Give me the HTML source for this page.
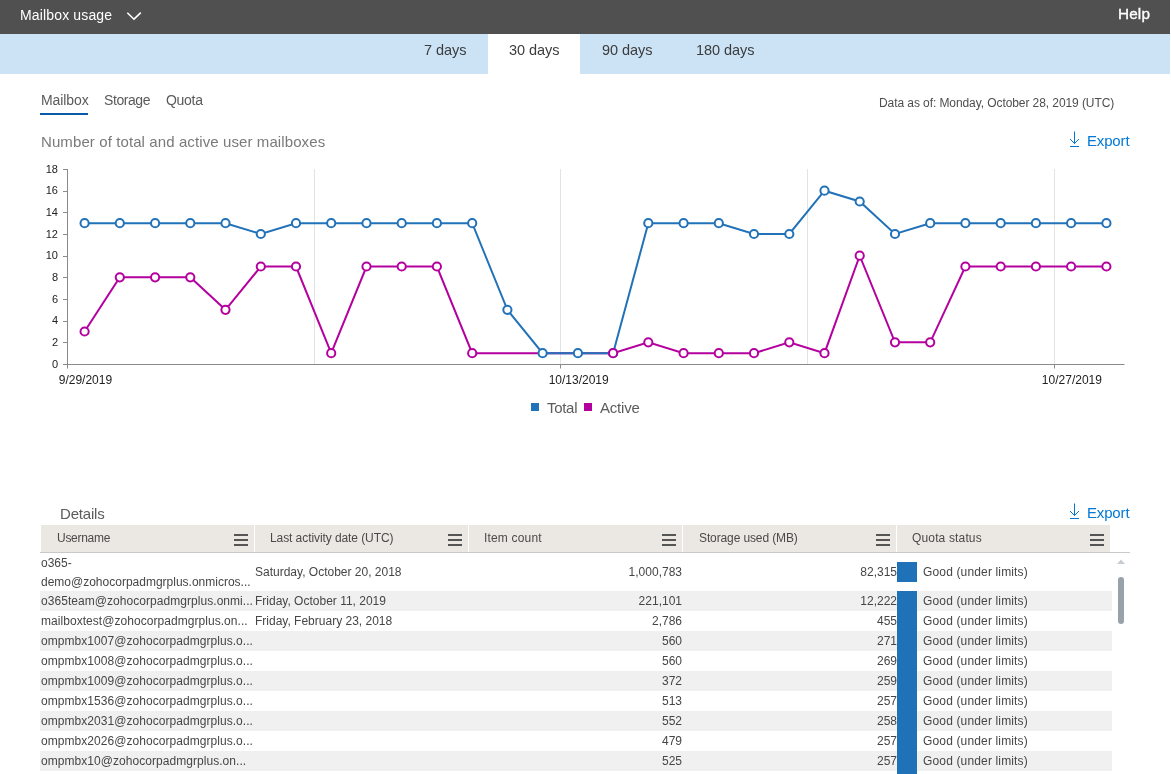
<!DOCTYPE html>
<html><head><meta charset="utf-8"><style>
html,body{margin:0;padding:0;}
body{width:1171px;height:774px;position:relative;overflow:hidden;background:#fff;font-family:"Liberation Sans", sans-serif;}
.t{position:absolute;white-space:nowrap;will-change:transform;}
svg{will-change:transform;}
</style></head><body>
<div style="position:absolute;left:0;top:0;width:1170px;height:34px;background:#505050"></div>
<div class="t" style="left:20.20px;top:7.85px;font-size:14px;line-height:14px;color:#fff;letter-spacing:0.15px;">Mailbox usage</div>
<svg style="position:absolute;left:125px;top:10px" width="18" height="12" viewBox="0 0 18 12"><polyline points="2.3,2.7 9,9.2 15.8,2.7" fill="none" stroke="#fff" stroke-width="1.6"/></svg>
<div class="t" style="left:1118.20px;top:5.85px;font-size:15.3px;line-height:15.3px;color:#fff;letter-spacing:0.15px;-webkit-text-stroke:0.35px #fff">Help</div>
<div style="position:absolute;left:0;top:34px;width:1170px;height:40px;background:#cce2f5"></div>
<div style="position:absolute;left:488px;top:34px;width:92px;height:40px;background:#fff"></div>
<div class="t" style="left:423.80px;top:42.73px;font-size:14.5px;line-height:14.5px;color:#3c3c3c;letter-spacing:-0.05px;">7 days</div>
<div class="t" style="left:508.90px;top:42.73px;font-size:14.5px;line-height:14.5px;color:#3c3c3c;letter-spacing:-0.05px;">30 days</div>
<div class="t" style="left:601.70px;top:42.73px;font-size:14.5px;line-height:14.5px;color:#3c3c3c;letter-spacing:-0.05px;">90 days</div>
<div class="t" style="left:695.60px;top:42.73px;font-size:14.5px;line-height:14.5px;color:#3c3c3c;letter-spacing:-0.05px;">180 days</div>
<div class="t" style="left:40.60px;top:93.05px;font-size:14px;line-height:14px;color:#5a5a5a;letter-spacing:-0.1px;">Mailbox</div>
<div class="t" style="left:103.80px;top:93.05px;font-size:14px;line-height:14px;color:#5a5a5a;letter-spacing:-0.42px;">Storage</div>
<div class="t" style="left:165.80px;top:93.05px;font-size:14px;line-height:14px;color:#5a5a5a;letter-spacing:-0.3px;">Quota</div>
<div style="position:absolute;left:40px;top:113px;width:48px;height:2px;background:#0b5aa8"></div>
<div class="t" style="left:878.90px;top:97.14px;font-size:12px;line-height:12px;color:#4e4e4e;letter-spacing:-0.08px;">Data as of: Monday, October 28, 2019 (UTC)</div>
<div class="t" style="left:40.60px;top:134.10px;font-size:15px;line-height:15px;color:#7a7a7a;letter-spacing:0.1px;">Number of total and active user mailboxes</div>
<svg style="position:absolute;left:1068px;top:130px" width="14" height="20" viewBox="0 0 14 20"><path d="M6.5 1.5 V13.5 M2 9 L6.5 13.5 L11 9 M2 16.5 H11" fill="none" stroke="#0078d4" stroke-width="1"/></svg>
<div class="t" style="left:1087.00px;top:133.20px;font-size:15px;line-height:15px;color:#0078d4;letter-spacing:-0.16px;">Export</div>
<svg style="position:absolute;left:0;top:0" width="1171" height="774"><line x1="314.5" y1="169" x2="314.5" y2="364" stroke="#e3e3e3" stroke-width="1"/><line x1="560.5" y1="169" x2="560.5" y2="364" stroke="#e3e3e3" stroke-width="1"/><line x1="807.5" y1="169" x2="807.5" y2="364" stroke="#e3e3e3" stroke-width="1"/><line x1="1054.5" y1="169" x2="1054.5" y2="364" stroke="#e3e3e3" stroke-width="1"/><line x1="67.5" y1="169" x2="67.5" y2="365" stroke="#8a8a8a" stroke-width="1"/><line x1="67" y1="364.5" x2="1124.5" y2="364.5" stroke="#8a8a8a" stroke-width="1"/><line x1="63" y1="364.5" x2="67" y2="364.5" stroke="#8a8a8a" stroke-width="1"/><text x="58" y="367.5" text-anchor="end" font-family="Liberation Sans" font-size="11" fill="#222">0</text><line x1="63" y1="342.5" x2="67" y2="342.5" stroke="#8a8a8a" stroke-width="1"/><text x="58" y="345.8" text-anchor="end" font-family="Liberation Sans" font-size="11" fill="#222">2</text><line x1="63" y1="321.5" x2="67" y2="321.5" stroke="#8a8a8a" stroke-width="1"/><text x="58" y="324.2" text-anchor="end" font-family="Liberation Sans" font-size="11" fill="#222">4</text><line x1="63" y1="299.5" x2="67" y2="299.5" stroke="#8a8a8a" stroke-width="1"/><text x="58" y="302.5" text-anchor="end" font-family="Liberation Sans" font-size="11" fill="#222">6</text><line x1="63" y1="277.5" x2="67" y2="277.5" stroke="#8a8a8a" stroke-width="1"/><text x="58" y="280.8" text-anchor="end" font-family="Liberation Sans" font-size="11" fill="#222">8</text><line x1="63" y1="256.5" x2="67" y2="256.5" stroke="#8a8a8a" stroke-width="1"/><text x="58" y="259.2" text-anchor="end" font-family="Liberation Sans" font-size="11" fill="#222">10</text><line x1="63" y1="234.5" x2="67" y2="234.5" stroke="#8a8a8a" stroke-width="1"/><text x="58" y="237.5" text-anchor="end" font-family="Liberation Sans" font-size="11" fill="#222">12</text><line x1="63" y1="212.5" x2="67" y2="212.5" stroke="#8a8a8a" stroke-width="1"/><text x="58" y="215.8" text-anchor="end" font-family="Liberation Sans" font-size="11" fill="#222">14</text><line x1="63" y1="191.5" x2="67" y2="191.5" stroke="#8a8a8a" stroke-width="1"/><text x="58" y="194.2" text-anchor="end" font-family="Liberation Sans" font-size="11" fill="#222">16</text><line x1="63" y1="169.5" x2="67" y2="169.5" stroke="#8a8a8a" stroke-width="1"/><text x="58" y="172.5" text-anchor="end" font-family="Liberation Sans" font-size="11" fill="#222">18</text><line x1="67.5" y1="364" x2="67.5" y2="368.5" stroke="#8a8a8a" stroke-width="1"/><text x="85.4" y="384" text-anchor="middle" font-family="Liberation Sans" font-size="12" fill="#222">9/29/2019</text><line x1="560.5" y1="364" x2="560.5" y2="368.5" stroke="#8a8a8a" stroke-width="1"/><text x="578.7" y="384" text-anchor="middle" font-family="Liberation Sans" font-size="12" fill="#222">10/13/2019</text><line x1="1054.5" y1="364" x2="1054.5" y2="368.5" stroke="#8a8a8a" stroke-width="1"/><text x="1071.9" y="384" text-anchor="middle" font-family="Liberation Sans" font-size="12" fill="#222">10/27/2019</text><path d="M84.6,331.5 L119.8,277.3 L155.1,277.3 L190.3,277.3 L225.5,309.8 L260.8,266.5 L296.0,266.5 L331.2,353.2 L366.5,266.5 L401.7,266.5 L436.9,266.5 L472.2,353.2 L613.1,353.2 L648.3,342.3 L683.6,353.2 L718.8,353.2 L754.0,353.2 L789.3,342.3 L824.5,353.2 L859.7,255.7 L895.0,342.3 L930.2,342.3 L965.4,266.5 L1000.7,266.5 L1035.9,266.5 L1071.1,266.5 L1106.4,266.5" fill="none" stroke="#b4009e" stroke-width="2"/><path d="M84.6,223.2 L119.8,223.2 L155.1,223.2 L190.3,223.2 L225.5,223.2 L260.8,234.0 L296.0,223.2 L331.2,223.2 L366.5,223.2 L401.7,223.2 L436.9,223.2 L472.2,223.2 L507.4,309.8 L542.6,353.2 L577.9,353.2 L613.1,353.2 L648.3,223.2 L683.6,223.2 L718.8,223.2 L754.0,234.0 L789.3,234.0 L824.5,190.7 L859.7,201.5 L895.0,234.0 L930.2,223.2 L965.4,223.2 L1000.7,223.2 L1035.9,223.2 L1071.1,223.2 L1106.4,223.2" fill="none" stroke="#2172b8" stroke-width="2"/><circle cx="84.6" cy="223.2" r="4.1" fill="#fff" stroke="#2172b8" stroke-width="2"/><circle cx="119.8" cy="223.2" r="4.1" fill="#fff" stroke="#2172b8" stroke-width="2"/><circle cx="155.1" cy="223.2" r="4.1" fill="#fff" stroke="#2172b8" stroke-width="2"/><circle cx="190.3" cy="223.2" r="4.1" fill="#fff" stroke="#2172b8" stroke-width="2"/><circle cx="225.5" cy="223.2" r="4.1" fill="#fff" stroke="#2172b8" stroke-width="2"/><circle cx="260.8" cy="234.0" r="4.1" fill="#fff" stroke="#2172b8" stroke-width="2"/><circle cx="296.0" cy="223.2" r="4.1" fill="#fff" stroke="#2172b8" stroke-width="2"/><circle cx="331.2" cy="223.2" r="4.1" fill="#fff" stroke="#2172b8" stroke-width="2"/><circle cx="366.5" cy="223.2" r="4.1" fill="#fff" stroke="#2172b8" stroke-width="2"/><circle cx="401.7" cy="223.2" r="4.1" fill="#fff" stroke="#2172b8" stroke-width="2"/><circle cx="436.9" cy="223.2" r="4.1" fill="#fff" stroke="#2172b8" stroke-width="2"/><circle cx="472.2" cy="223.2" r="4.1" fill="#fff" stroke="#2172b8" stroke-width="2"/><circle cx="507.4" cy="309.8" r="4.1" fill="#fff" stroke="#2172b8" stroke-width="2"/><circle cx="542.6" cy="353.2" r="4.1" fill="#fff" stroke="#2172b8" stroke-width="2"/><circle cx="577.9" cy="353.2" r="4.1" fill="#fff" stroke="#2172b8" stroke-width="2"/><circle cx="613.1" cy="353.2" r="4.1" fill="#fff" stroke="#2172b8" stroke-width="2"/><circle cx="648.3" cy="223.2" r="4.1" fill="#fff" stroke="#2172b8" stroke-width="2"/><circle cx="683.6" cy="223.2" r="4.1" fill="#fff" stroke="#2172b8" stroke-width="2"/><circle cx="718.8" cy="223.2" r="4.1" fill="#fff" stroke="#2172b8" stroke-width="2"/><circle cx="754.0" cy="234.0" r="4.1" fill="#fff" stroke="#2172b8" stroke-width="2"/><circle cx="789.3" cy="234.0" r="4.1" fill="#fff" stroke="#2172b8" stroke-width="2"/><circle cx="824.5" cy="190.7" r="4.1" fill="#fff" stroke="#2172b8" stroke-width="2"/><circle cx="859.7" cy="201.5" r="4.1" fill="#fff" stroke="#2172b8" stroke-width="2"/><circle cx="895.0" cy="234.0" r="4.1" fill="#fff" stroke="#2172b8" stroke-width="2"/><circle cx="930.2" cy="223.2" r="4.1" fill="#fff" stroke="#2172b8" stroke-width="2"/><circle cx="965.4" cy="223.2" r="4.1" fill="#fff" stroke="#2172b8" stroke-width="2"/><circle cx="1000.7" cy="223.2" r="4.1" fill="#fff" stroke="#2172b8" stroke-width="2"/><circle cx="1035.9" cy="223.2" r="4.1" fill="#fff" stroke="#2172b8" stroke-width="2"/><circle cx="1071.1" cy="223.2" r="4.1" fill="#fff" stroke="#2172b8" stroke-width="2"/><circle cx="1106.4" cy="223.2" r="4.1" fill="#fff" stroke="#2172b8" stroke-width="2"/><circle cx="84.6" cy="331.5" r="4.1" fill="#fff" stroke="#b4009e" stroke-width="2"/><circle cx="119.8" cy="277.3" r="4.1" fill="#fff" stroke="#b4009e" stroke-width="2"/><circle cx="155.1" cy="277.3" r="4.1" fill="#fff" stroke="#b4009e" stroke-width="2"/><circle cx="190.3" cy="277.3" r="4.1" fill="#fff" stroke="#b4009e" stroke-width="2"/><circle cx="225.5" cy="309.8" r="4.1" fill="#fff" stroke="#b4009e" stroke-width="2"/><circle cx="260.8" cy="266.5" r="4.1" fill="#fff" stroke="#b4009e" stroke-width="2"/><circle cx="296.0" cy="266.5" r="4.1" fill="#fff" stroke="#b4009e" stroke-width="2"/><circle cx="331.2" cy="353.2" r="4.1" fill="#fff" stroke="#b4009e" stroke-width="2"/><circle cx="366.5" cy="266.5" r="4.1" fill="#fff" stroke="#b4009e" stroke-width="2"/><circle cx="401.7" cy="266.5" r="4.1" fill="#fff" stroke="#b4009e" stroke-width="2"/><circle cx="436.9" cy="266.5" r="4.1" fill="#fff" stroke="#b4009e" stroke-width="2"/><circle cx="472.2" cy="353.2" r="4.1" fill="#fff" stroke="#b4009e" stroke-width="2"/><circle cx="613.1" cy="353.2" r="4.1" fill="#fff" stroke="#b4009e" stroke-width="2"/><circle cx="648.3" cy="342.3" r="4.1" fill="#fff" stroke="#b4009e" stroke-width="2"/><circle cx="683.6" cy="353.2" r="4.1" fill="#fff" stroke="#b4009e" stroke-width="2"/><circle cx="718.8" cy="353.2" r="4.1" fill="#fff" stroke="#b4009e" stroke-width="2"/><circle cx="754.0" cy="353.2" r="4.1" fill="#fff" stroke="#b4009e" stroke-width="2"/><circle cx="789.3" cy="342.3" r="4.1" fill="#fff" stroke="#b4009e" stroke-width="2"/><circle cx="824.5" cy="353.2" r="4.1" fill="#fff" stroke="#b4009e" stroke-width="2"/><circle cx="859.7" cy="255.7" r="4.1" fill="#fff" stroke="#b4009e" stroke-width="2"/><circle cx="895.0" cy="342.3" r="4.1" fill="#fff" stroke="#b4009e" stroke-width="2"/><circle cx="930.2" cy="342.3" r="4.1" fill="#fff" stroke="#b4009e" stroke-width="2"/><circle cx="965.4" cy="266.5" r="4.1" fill="#fff" stroke="#b4009e" stroke-width="2"/><circle cx="1000.7" cy="266.5" r="4.1" fill="#fff" stroke="#b4009e" stroke-width="2"/><circle cx="1035.9" cy="266.5" r="4.1" fill="#fff" stroke="#b4009e" stroke-width="2"/><circle cx="1071.1" cy="266.5" r="4.1" fill="#fff" stroke="#b4009e" stroke-width="2"/><circle cx="1106.4" cy="266.5" r="4.1" fill="#fff" stroke="#b4009e" stroke-width="2"/></svg>
<div style="position:absolute;left:531px;top:403px;width:8px;height:8px;background:#2172b8"></div>
<div class="t" style="left:546.90px;top:400.00px;font-size:15px;line-height:15px;color:#5c5c5c;letter-spacing:-0.3px;">Total</div>
<div style="position:absolute;left:584px;top:403px;width:8px;height:8px;background:#b4009e"></div>
<div class="t" style="left:599.50px;top:400.00px;font-size:15px;line-height:15px;color:#5c5c5c;letter-spacing:-0.2px;">Active</div>
<div class="t" style="left:60.40px;top:506.10px;font-size:15px;line-height:15px;color:#5c5c5c;letter-spacing:-0.18px;">Details</div>
<svg style="position:absolute;left:1068px;top:502px" width="14" height="20" viewBox="0 0 14 20"><path d="M6.5 1.5 V13.5 M2 9 L6.5 13.5 L11 9 M2 16.5 H11" fill="none" stroke="#0078d4" stroke-width="1"/></svg>
<div class="t" style="left:1087.00px;top:505.20px;font-size:15px;line-height:15px;color:#0078d4;letter-spacing:-0.16px;">Export</div>
<div style="position:absolute;left:41px;top:525px;width:1069px;height:27px;background:#ebe7e3"></div>
<div style="position:absolute;left:40px;top:552px;width:1090px;height:1px;background:#c9c9c9"></div>
<div style="position:absolute;left:254px;top:525px;width:1px;height:27px;background:#fff"></div>
<div style="position:absolute;left:468px;top:525px;width:1px;height:27px;background:#fff"></div>
<div style="position:absolute;left:682px;top:525px;width:1px;height:27px;background:#fff"></div>
<div style="position:absolute;left:896px;top:525px;width:1px;height:27px;background:#fff"></div>
<div class="t" style="left:57.00px;top:531.84px;font-size:12px;line-height:12px;color:#4a4a4a;letter-spacing:-0.29px;">Username</div>
<div style="position:absolute;left:234px;top:534px;width:14px;height:2px;background:#555"></div>
<div style="position:absolute;left:234px;top:539px;width:14px;height:2px;background:#555"></div>
<div style="position:absolute;left:234px;top:544px;width:14px;height:2px;background:#555"></div>
<div class="t" style="left:270.00px;top:531.84px;font-size:12px;line-height:12px;color:#4a4a4a;letter-spacing:-0.08px;">Last activity date (UTC)</div>
<div style="position:absolute;left:448px;top:534px;width:14px;height:2px;background:#555"></div>
<div style="position:absolute;left:448px;top:539px;width:14px;height:2px;background:#555"></div>
<div style="position:absolute;left:448px;top:544px;width:14px;height:2px;background:#555"></div>
<div class="t" style="left:484.00px;top:531.84px;font-size:12px;line-height:12px;color:#4a4a4a;letter-spacing:0.17px;">Item count</div>
<div style="position:absolute;left:662px;top:534px;width:14px;height:2px;background:#555"></div>
<div style="position:absolute;left:662px;top:539px;width:14px;height:2px;background:#555"></div>
<div style="position:absolute;left:662px;top:544px;width:14px;height:2px;background:#555"></div>
<div class="t" style="left:698.50px;top:531.84px;font-size:12px;line-height:12px;color:#4a4a4a;letter-spacing:-0.12px;">Storage used (MB)</div>
<div style="position:absolute;left:876px;top:534px;width:14px;height:2px;background:#555"></div>
<div style="position:absolute;left:876px;top:539px;width:14px;height:2px;background:#555"></div>
<div style="position:absolute;left:876px;top:544px;width:14px;height:2px;background:#555"></div>
<div class="t" style="left:912.00px;top:531.84px;font-size:12px;line-height:12px;color:#4a4a4a;letter-spacing:0.15px;">Quota status</div>
<div style="position:absolute;left:1090px;top:534px;width:14px;height:2px;background:#555"></div>
<div style="position:absolute;left:1090px;top:539px;width:14px;height:2px;background:#555"></div>
<div style="position:absolute;left:1090px;top:544px;width:14px;height:2px;background:#555"></div>
<div class="t" style="left:41.00px;top:557.24px;font-size:12px;line-height:12px;color:#464646;letter-spacing:0px;">o365-</div>
<div class="t" style="left:41.00px;top:575.64px;font-size:12px;line-height:12px;color:#464646;letter-spacing:0px;">demo@zohocorpadmgrplus.onmicros...</div>
<div class="t" style="left:254.50px;top:566.44px;font-size:12px;line-height:12px;color:#464646;letter-spacing:0px;">Saturday, October 20, 2018</div>
<div class="t" style="left:682.00px;top:566.44px;font-size:12px;line-height:12px;color:#464646;letter-spacing:0px;transform:translateX(-100%)">1,000,783</div>
<div class="t" style="left:896.50px;top:566.44px;font-size:12px;line-height:12px;color:#464646;letter-spacing:0px;transform:translateX(-100%)">82,315</div>
<div style="position:absolute;left:897px;top:562px;width:20px;height:20px;background:#2072b8"></div>
<div class="t" style="left:922.50px;top:566.44px;font-size:12px;line-height:12px;color:#464646;letter-spacing:0.15px;">Good (under limits)</div>
<div style="position:absolute;left:40px;top:591px;width:1072px;height:20px;background:#f0f0f0"></div>
<div class="t" style="left:41.00px;top:595.14px;font-size:12px;line-height:12px;color:#464646;letter-spacing:0.05px;">o365team@zohocorpadmgrplus.onmi...</div>
<div class="t" style="left:254.50px;top:595.14px;font-size:12px;line-height:12px;color:#464646;letter-spacing:0px;">Friday, October 11, 2019</div>
<div class="t" style="left:682.00px;top:595.14px;font-size:12px;line-height:12px;color:#464646;letter-spacing:0px;transform:translateX(-100%)">221,101</div>
<div class="t" style="left:896.50px;top:595.14px;font-size:12px;line-height:12px;color:#464646;letter-spacing:0px;transform:translateX(-100%)">12,222</div>
<div style="position:absolute;left:897px;top:591px;width:20px;height:20px;background:#2072b8"></div>
<div class="t" style="left:922.50px;top:595.14px;font-size:12px;line-height:12px;color:#464646;letter-spacing:0.15px;">Good (under limits)</div>
<div class="t" style="left:41.00px;top:615.14px;font-size:12px;line-height:12px;color:#464646;letter-spacing:0.05px;">mailboxtest@zohocorpadmgrplus.on...</div>
<div class="t" style="left:254.50px;top:615.14px;font-size:12px;line-height:12px;color:#464646;letter-spacing:0px;">Friday, February 23, 2018</div>
<div class="t" style="left:682.00px;top:615.14px;font-size:12px;line-height:12px;color:#464646;letter-spacing:0px;transform:translateX(-100%)">2,786</div>
<div class="t" style="left:896.50px;top:615.14px;font-size:12px;line-height:12px;color:#464646;letter-spacing:0px;transform:translateX(-100%)">455</div>
<div style="position:absolute;left:897px;top:611px;width:20px;height:20px;background:#2072b8"></div>
<div class="t" style="left:922.50px;top:615.14px;font-size:12px;line-height:12px;color:#464646;letter-spacing:0.15px;">Good (under limits)</div>
<div style="position:absolute;left:40px;top:631px;width:1072px;height:20px;background:#f0f0f0"></div>
<div class="t" style="left:41.00px;top:635.14px;font-size:12px;line-height:12px;color:#464646;letter-spacing:0.05px;">ompmbx1007@zohocorpadmgrplus.o...</div>
<div class="t" style="left:682.00px;top:635.14px;font-size:12px;line-height:12px;color:#464646;letter-spacing:0px;transform:translateX(-100%)">560</div>
<div class="t" style="left:896.50px;top:635.14px;font-size:12px;line-height:12px;color:#464646;letter-spacing:0px;transform:translateX(-100%)">271</div>
<div style="position:absolute;left:897px;top:631px;width:20px;height:20px;background:#2072b8"></div>
<div class="t" style="left:922.50px;top:635.14px;font-size:12px;line-height:12px;color:#464646;letter-spacing:0.15px;">Good (under limits)</div>
<div class="t" style="left:41.00px;top:655.14px;font-size:12px;line-height:12px;color:#464646;letter-spacing:0.05px;">ompmbx1008@zohocorpadmgrplus.o...</div>
<div class="t" style="left:682.00px;top:655.14px;font-size:12px;line-height:12px;color:#464646;letter-spacing:0px;transform:translateX(-100%)">560</div>
<div class="t" style="left:896.50px;top:655.14px;font-size:12px;line-height:12px;color:#464646;letter-spacing:0px;transform:translateX(-100%)">269</div>
<div style="position:absolute;left:897px;top:651px;width:20px;height:20px;background:#2072b8"></div>
<div class="t" style="left:922.50px;top:655.14px;font-size:12px;line-height:12px;color:#464646;letter-spacing:0.15px;">Good (under limits)</div>
<div style="position:absolute;left:40px;top:671px;width:1072px;height:20px;background:#f0f0f0"></div>
<div class="t" style="left:41.00px;top:675.14px;font-size:12px;line-height:12px;color:#464646;letter-spacing:0.05px;">ompmbx1009@zohocorpadmgrplus.o...</div>
<div class="t" style="left:682.00px;top:675.14px;font-size:12px;line-height:12px;color:#464646;letter-spacing:0px;transform:translateX(-100%)">372</div>
<div class="t" style="left:896.50px;top:675.14px;font-size:12px;line-height:12px;color:#464646;letter-spacing:0px;transform:translateX(-100%)">259</div>
<div style="position:absolute;left:897px;top:671px;width:20px;height:20px;background:#2072b8"></div>
<div class="t" style="left:922.50px;top:675.14px;font-size:12px;line-height:12px;color:#464646;letter-spacing:0.15px;">Good (under limits)</div>
<div class="t" style="left:41.00px;top:695.14px;font-size:12px;line-height:12px;color:#464646;letter-spacing:0.05px;">ompmbx1536@zohocorpadmgrplus.o...</div>
<div class="t" style="left:682.00px;top:695.14px;font-size:12px;line-height:12px;color:#464646;letter-spacing:0px;transform:translateX(-100%)">513</div>
<div class="t" style="left:896.50px;top:695.14px;font-size:12px;line-height:12px;color:#464646;letter-spacing:0px;transform:translateX(-100%)">257</div>
<div style="position:absolute;left:897px;top:691px;width:20px;height:20px;background:#2072b8"></div>
<div class="t" style="left:922.50px;top:695.14px;font-size:12px;line-height:12px;color:#464646;letter-spacing:0.15px;">Good (under limits)</div>
<div style="position:absolute;left:40px;top:711px;width:1072px;height:20px;background:#f0f0f0"></div>
<div class="t" style="left:41.00px;top:715.14px;font-size:12px;line-height:12px;color:#464646;letter-spacing:0.05px;">ompmbx2031@zohocorpadmgrplus.o...</div>
<div class="t" style="left:682.00px;top:715.14px;font-size:12px;line-height:12px;color:#464646;letter-spacing:0px;transform:translateX(-100%)">552</div>
<div class="t" style="left:896.50px;top:715.14px;font-size:12px;line-height:12px;color:#464646;letter-spacing:0px;transform:translateX(-100%)">258</div>
<div style="position:absolute;left:897px;top:711px;width:20px;height:20px;background:#2072b8"></div>
<div class="t" style="left:922.50px;top:715.14px;font-size:12px;line-height:12px;color:#464646;letter-spacing:0.15px;">Good (under limits)</div>
<div class="t" style="left:41.00px;top:735.14px;font-size:12px;line-height:12px;color:#464646;letter-spacing:0.05px;">ompmbx2026@zohocorpadmgrplus.o...</div>
<div class="t" style="left:682.00px;top:735.14px;font-size:12px;line-height:12px;color:#464646;letter-spacing:0px;transform:translateX(-100%)">479</div>
<div class="t" style="left:896.50px;top:735.14px;font-size:12px;line-height:12px;color:#464646;letter-spacing:0px;transform:translateX(-100%)">257</div>
<div style="position:absolute;left:897px;top:731px;width:20px;height:20px;background:#2072b8"></div>
<div class="t" style="left:922.50px;top:735.14px;font-size:12px;line-height:12px;color:#464646;letter-spacing:0.15px;">Good (under limits)</div>
<div style="position:absolute;left:40px;top:751px;width:1072px;height:20px;background:#f0f0f0"></div>
<div class="t" style="left:41.00px;top:755.14px;font-size:12px;line-height:12px;color:#464646;letter-spacing:0.05px;">ompmbx10@zohocorpadmgrplus.on...</div>
<div class="t" style="left:682.00px;top:755.14px;font-size:12px;line-height:12px;color:#464646;letter-spacing:0px;transform:translateX(-100%)">525</div>
<div class="t" style="left:896.50px;top:755.14px;font-size:12px;line-height:12px;color:#464646;letter-spacing:0px;transform:translateX(-100%)">257</div>
<div style="position:absolute;left:897px;top:751px;width:20px;height:20px;background:#2072b8"></div>
<div class="t" style="left:922.50px;top:755.14px;font-size:12px;line-height:12px;color:#464646;letter-spacing:0.15px;">Good (under limits)</div>
<div style="position:absolute;left:897px;top:771px;width:20px;height:20px;background:#2072b8"></div>
<svg style="position:absolute;left:1116px;top:558px" width="10" height="7"><polygon points="1,6 5,1.5 9,6" fill="#c6ccd1"/></svg>
<div style="position:absolute;left:1118px;top:577px;width:6px;height:47px;border-radius:3px;background:#98a2aa"></div>
</body></html>
